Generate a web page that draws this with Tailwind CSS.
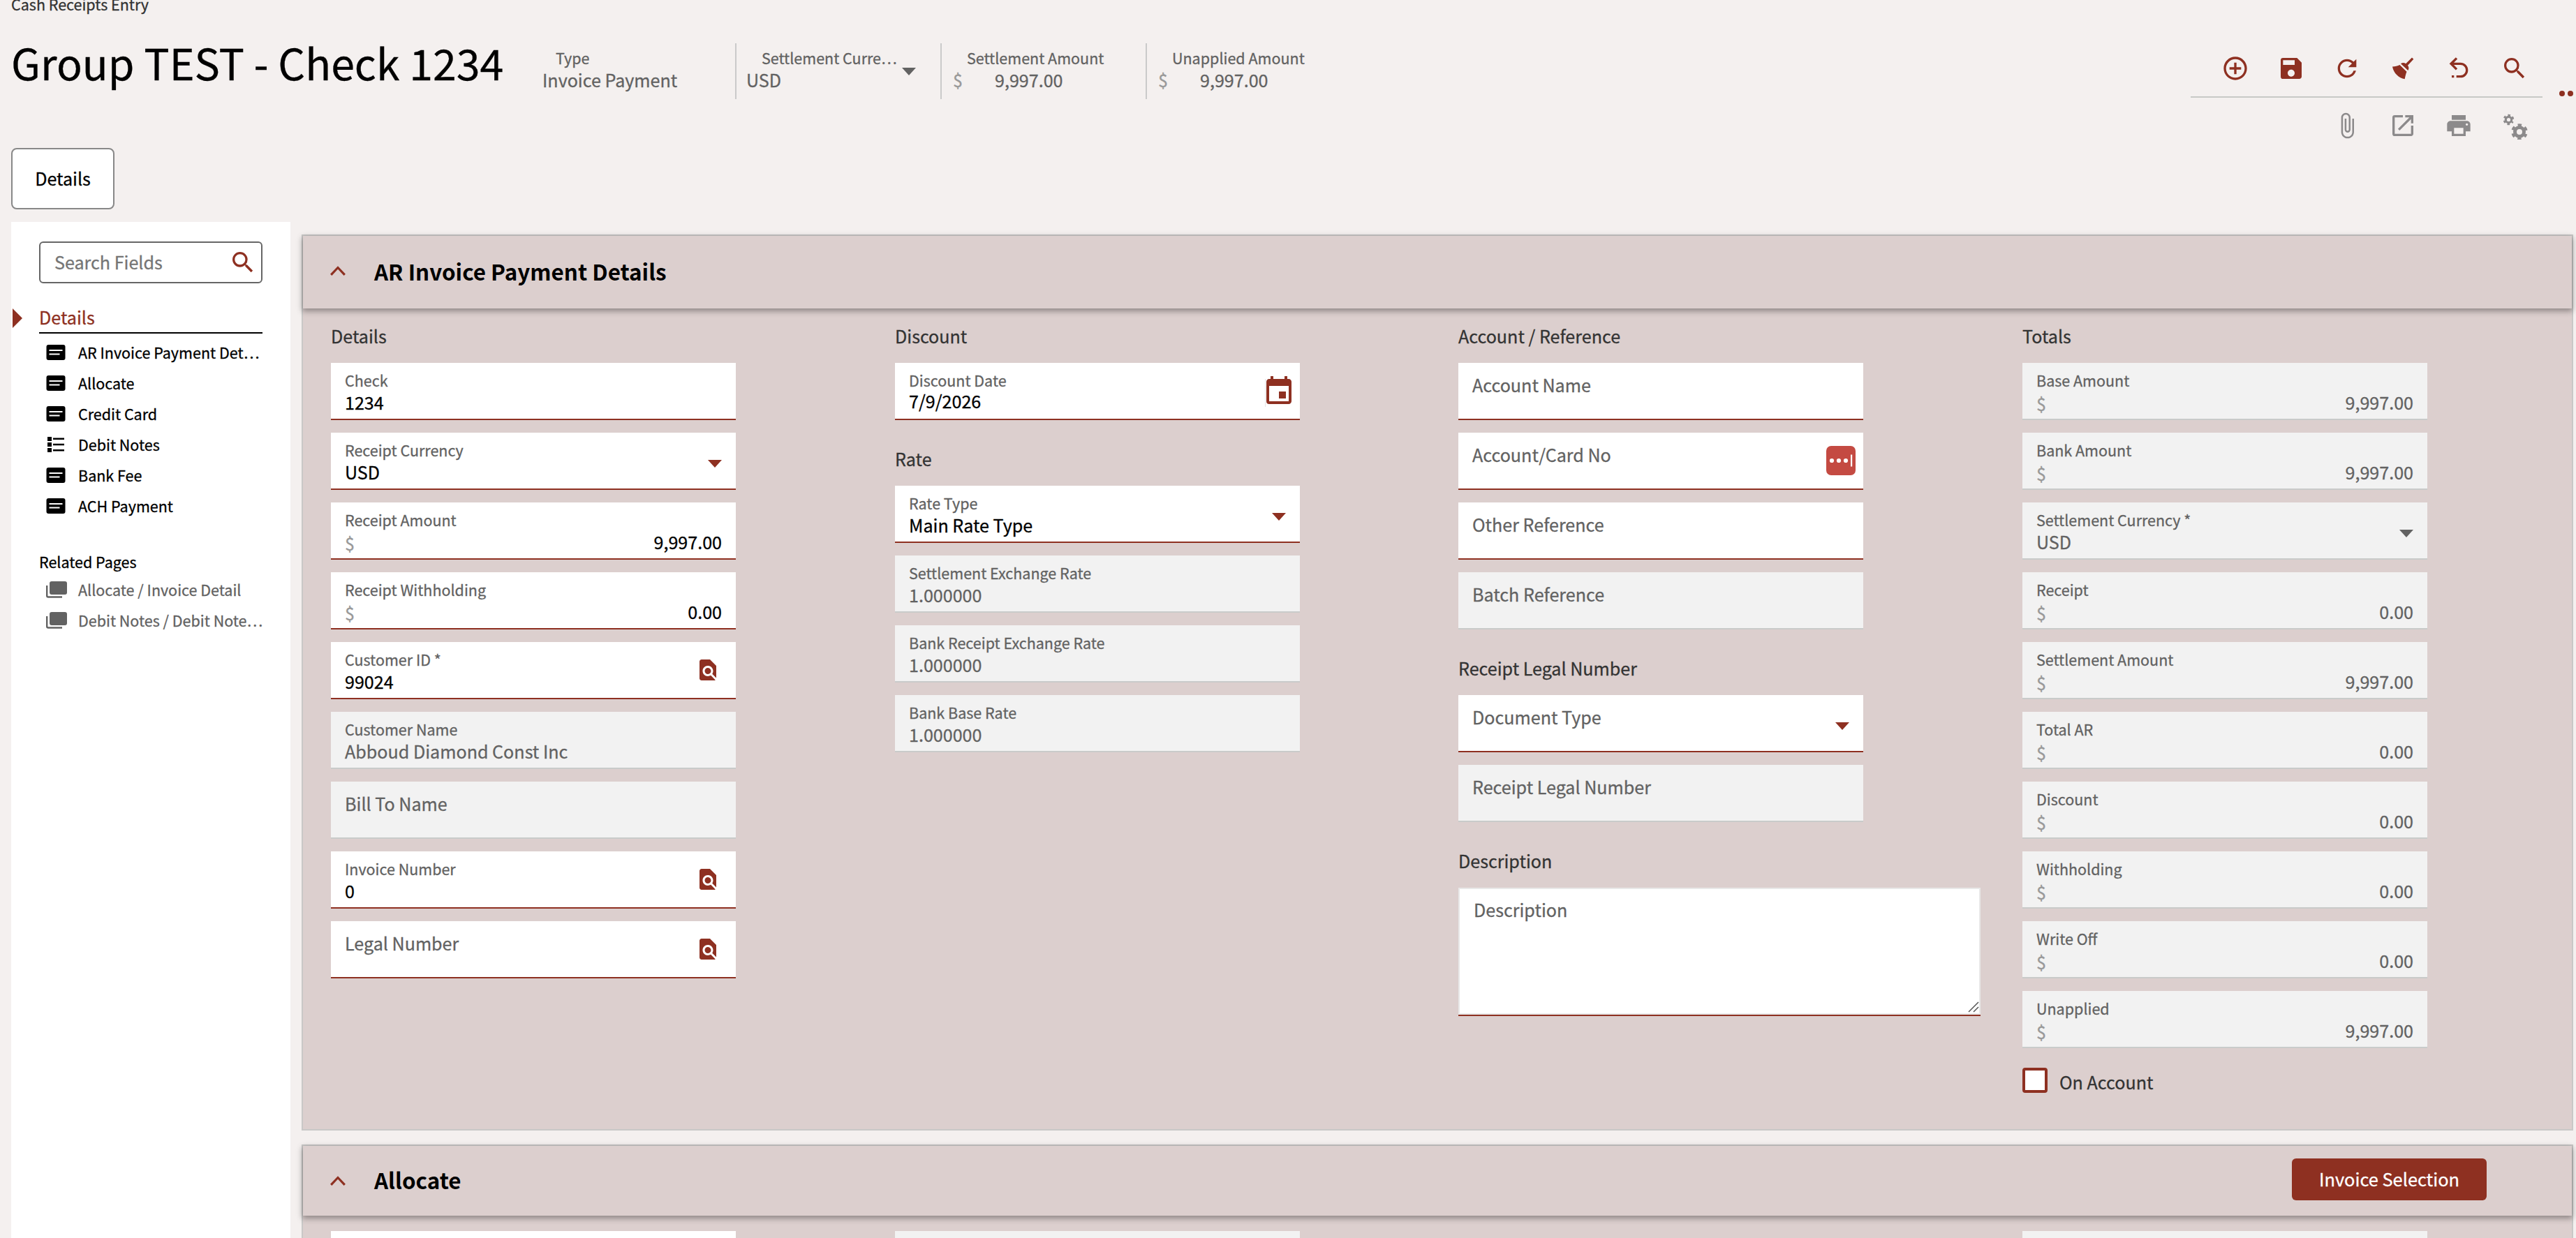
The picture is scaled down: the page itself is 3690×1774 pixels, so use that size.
<!DOCTYPE html>
<html lang="en">
  <head>
    <meta charset="UTF-8" />
    <meta name="viewport" content="width=device-width, initial-scale=1.0" />
    <title>Cash Receipts Entry</title>
    <script src="https://cdn.jsdelivr.net/npm/@tailwindcss/browser@4"></script>
  </head>
  <body
    class="h-screen overflow-hidden bg-[#f4f0ef] text-black text-[25.1px] leading-8 whitespace-nowrap [-webkit-text-stroke:0.3px] font-['Noto_Sans_CJK_SC','Noto_Sans',sans-serif]"
  >
    <div class="flex flex-col h-screen overflow-hidden">
      <!-- Header -->
      <header class="flex justify-between h-[212px] shrink-0 pl-4">
        <div>
          <div class="h-5 flex items-end text-[21.5px] leading-7 text-[#333]">
            <span>Cash Receipts Entry</span>
          </div>
          <div class="flex">
            <h1 class="w-[761px] mt-[29px] text-[60.9px] leading-[80px]">
              Group TEST - Check 1234
            </h1>
            <div class="flex mt-[42px] h-20 text-[#626262]">
              <div class="w-[276px] pt-[7px]">
                <div class="pl-[19px] text-[21.5px] leading-7">Type</div>
                <div class="mt-px">Invoice Payment</div>
              </div>
              <div class="w-[294px] flex border-l-2 border-[#cacaca] pt-[7px] pl-[14px]">
                <div class="w-[223px]">
                  <div class="pl-[22px] text-[21.5px] leading-7">
                    Settlement Curre…
                  </div>
                  <div class="mt-px">USD</div>
                </div>
                <svg class="w-5 h-[11px] mt-7" viewBox="0 0 20 11" fill="#626262"><path d="M0 0h20L10 11z" /></svg>
              </div>
              <div class="w-[294px] border-l-2 border-[#cacaca] pt-[7px] pl-4">
                <div class="pl-5 text-[21.5px] leading-7">
                  Settlement Amount
                </div>
                <div class="flex mt-px">
                  <span class="w-[60px] text-[#999]">$</span>
                  <span>9,997.00</span>
                </div>
              </div>
              <div class="w-[294px] border-l-2 border-[#cacaca] pt-[7px] pl-4">
                <div class="pl-5 text-[21.5px] leading-7">
                  Unapplied Amount
                </div>
                <div class="flex mt-px">
                  <span class="w-[60px] text-[#999]">$</span>
                  <span>9,997.00</span>
                </div>
              </div>
            </div>
          </div>
        </div>

        <!-- Toolbar -->
        <div class="flex">
          <div class="w-[504px] pt-[78px]">
            <div class="flex justify-end gap-10 pr-5 pb-5 border-b-2 border-[#c8c9c6] text-[#8e3021]">
              <svg class="w-10 h-10" viewBox="0 0 24 24" fill="currentColor"><path d="M13 7h-2v4H7v2h4v4h2v-4h4v-2h-4V7zm-1-5C6.480 2 2 6.480 2 12s4.480 10 10 10 10-4.480 10-10S17.520 2 12 2zm0 18c-4.410 0-8-3.590-8-8s3.590-8 8-8 8 3.590 8 8-3.590 8-8 8z" /></svg>
              <svg class="w-10 h-10" viewBox="0 0 24 24" fill="currentColor"><path d="M17 3H5a2 2 0 0 0-2 2v14a2 2 0 0 0 2 2h14c1.100 0 2-.900 2-2V7l-4-4zm-5 16c-1.660 0-3-1.340-3-3s1.340-3 3-3 3 1.340 3 3-1.340 3-3 3zm3-10H5V5h10v4z" /></svg>
              <svg class="w-10 h-10" viewBox="0 0 24 24" fill="currentColor"><path d="M17.650 6.350A7.958 7.958 0 0 0 12 4c-4.420 0-7.990 3.580-7.990 8s3.570 8 7.990 8c3.730 0 6.840-2.550 7.730-6h-2.080A5.990 5.990 0 0 1 12 18c-3.310 0-6-2.690-6-6s2.690-6 6-6c1.660 0 3.140.690 4.220 1.780L13 11h7V4l-2.350 2.350z" /></svg>
              <svg class="w-10 h-10" viewBox="0 0 24 24" fill="currentColor"><path d="M19.800 2.700l1.400 1.400-5 5.400c1 1.200 1.200 2.900.200 4.300L10.200 7.900c1.400-1 3.100-.900 4.300.100zM9.300 9l6 5.900c-.7 1.700-1.300 4-1.700 6.300-5.200-1-9.500-5-10.600-10.700C5.300 10.500 7.600 9.800 9.300 9z" /></svg>
              <svg class="w-10 h-10" viewBox="0 0 24 24" fill="currentColor"><path d="M13.500 7A6.500 6.500 0 0 1 20 13.500 6.500 6.500 0 0 1 13.500 20H10v-2h3.500c2.500 0 4.500-2 4.500-4.500S16 9 13.500 9H7.830l3.080 3.090L9.500 13.500 4 8l5.500-5.500 1.420 1.410L7.830 7h5.670M6 18h2v2H6v-2z" /></svg>
              <svg class="w-10 h-10" viewBox="0 0 24 24" fill="currentColor"><path d="M15.500 14h-.790l-.280-.270A6.471 6.471 0 0 0 16 9.500 6.500 6.500 0 1 0 9.500 16c1.610 0 3.090-.590 4.230-1.570l.270.280v.790l5 4.990L20.490 19l-4.990-5zm-6 0C7.010 14 5 11.990 5 9.500S7.010 5 9.500 5 14 7.010 14 9.500 11.990 14 9.500 14z" /></svg>
            </div>
            <div class="flex justify-end gap-10 pr-5 pt-5 text-[#8c8a8b]">
              <svg class="w-10 h-10" viewBox="0 0 24 24" fill="currentColor"><path d="M16.500 6v11.500c0 2.210-1.790 4-4 4s-4-1.790-4-4V5a2.500 2.500 0 0 1 5 0v10.500c0 .550-.450 1-1 1s-1-.450-1-1V6H10v9.500a2.500 2.500 0 0 0 5 0V5c0-2.210-1.790-4-4-4S7 2.790 7 5v12.500c0 3.040 2.460 5.500 5.500 5.500s5.500-2.460 5.500-5.500V6h-1.500z" /></svg>
              <svg class="w-10 h-10" viewBox="0 0 24 24" fill="currentColor"><path d="M19 19H5V5h7V3H5a2 2 0 0 0-2 2v14a2 2 0 0 0 2 2h14c1.100 0 2-.900 2-2v-7h-2v7zM14 3v2h3.590l-9.830 9.830 1.410 1.410L19 6.410V10h2V3h-7z" /></svg>
              <svg class="w-10 h-10" viewBox="0 0 24 24" fill="currentColor"><path d="M19 8H5c-1.660 0-3 1.340-3 3v6h4v4h12v-4h4v-6c0-1.660-1.340-3-3-3zm-3 11H8v-5h8v5zm3-7c-.550 0-1-.450-1-1s.450-1 1-1 1 .450 1 1-.450 1-1 1zm-1-9H6v4h12V3z" /></svg>
              <svg class="w-10 h-10" viewBox="0 0 40 40">
                <g fill="none" stroke="currentColor">
                  <circle cx="11.500" cy="11.500" r="4.200" stroke-width="3.200" />
                  <circle cx="11.500" cy="11.500" r="6.400" stroke-width="2.800" stroke-dasharray="3.350 3.350" stroke-dashoffset="1.700" transform="rotate(30 11.500 11.500)" />
                  <circle cx="27" cy="29" r="6.500" stroke-width="5" />
                  <circle cx="27" cy="29" r="10" stroke-width="3.600" stroke-dasharray="5.240 5.240" stroke-dashoffset="2.620" transform="rotate(30 27 29)" />
                </g>
              </svg>
            </div>
          </div>
          <div class="flex gap-1 w-12 pl-6 pt-[130px] overflow-hidden">
            <span class="w-2 h-2 shrink-0 rounded-full bg-[#8e3021]"></span>
            <span class="w-2 h-2 shrink-0 rounded-full bg-[#8e3021]"></span>
          </div>
        </div>
      </header>

      <!-- Tabs -->
      <nav class="h-[106px] shrink-0 pl-4">
        <div class="w-[148px] h-[88px] flex items-center justify-center pb-0.5 rounded-lg border-2 border-[#888] bg-white">
          Details
        </div>
      </nav>

      <div class="flex flex-1 min-h-0 pl-4">
        <!-- Sidebar -->
        <aside class="w-[400px] shrink-0 bg-white pt-7">
          <div class="flex items-center justify-between ml-10 w-80 h-[60px] border-2 border-[#666] rounded-md pl-5 pr-1.5 text-[#757575]">
            <span class="pb-0.5">Search Fields</span>
            <svg class="w-10 h-10" viewBox="0 0 24 24" fill="#8e3021"><path d="M15.500 14h-.790l-.280-.270A6.471 6.471 0 0 0 16 9.500 6.500 6.500 0 1 0 9.500 16c1.610 0 3.090-.590 4.230-1.570l.270.280v.790l5 4.990L20.490 19l-4.990-5zm-6 0C7.010 14 5 11.990 5 9.500S7.010 5 9.500 5 14 7.010 14 9.500 11.990 14 9.500 14z" /></svg>
          </div>
          <div class="flex pl-0.5 mt-8 text-[#8e3021]">
            <svg class="w-3.5 h-7 mt-1 mr-6" viewBox="0 0 14 28" fill="currentColor"><path d="M0 0l14 14L0 28z" /></svg>
            <div class="w-80 h-10 border-b-2 border-black">Details</div>
          </div>
          <ul id="sections" class="pl-[50px] pt-[5px] text-[21.5px]"></ul>
          <div class="pl-10 mt-8 pt-2.5 h-[50px] text-[21.5px]">Related Pages</div>
          <ul id="related" class="pl-[50px] -mt-1.5 text-[21.5px] text-[#626262]"></ul>
        </aside>

        <!-- Cards -->
        <main class="flex flex-col gap-5 pl-4 pt-[18px] w-[3270px] shrink-0">
          <section class="h-[1284px] shrink-0 border-2 border-[#c9c8c7] bg-[#dccfce]">
            <div class="h-[104px] flex items-center pl-[39px] shadow-[0_3px_8px_1px_rgba(0,0,0,0.35)]">
              <svg class="w-[22px] h-[14px] -mt-1" viewBox="0 0 22 14" fill="none" stroke="#8e3021" stroke-width="3.200"><path d="M1.200 12.800L11 2.500l9.800 10.300" /></svg>
              <h2 class="ml-[41px] pb-[3px] text-[31.4px] leading-10 font-bold [-webkit-text-stroke:0px]">
                AR Invoice Payment Details
              </h2>
            </div>
            <div class="grid grid-cols-[808px_807px_808px_580px] pl-10 pt-[22px]">
              <div id="details"></div>
              <div id="discount"></div>
              <div id="account"></div>
              <div id="totals"></div>
            </div>
          </section>

          <section class="h-[600px] shrink-0 border-2 border-[#c9c8c7] bg-[#dccfce]">
            <div class="h-[100px] flex items-center pl-[39px] pr-[122px] shadow-[0_3px_8px_1px_rgba(0,0,0,0.35)]">
              <svg class="w-[22px] h-[14px]" viewBox="0 0 22 14" fill="none" stroke="#8e3021" stroke-width="3.200"><path d="M1.200 12.800L11 2.500l9.800 10.300" /></svg>
              <h2 class="ml-[41px] pb-[3px] text-[31.4px] leading-10 font-bold [-webkit-text-stroke:0px]">
                Allocate
              </h2>
              <button class="ml-auto mb-1 pb-0.5 w-[279px] h-[60px] rounded-md bg-[#8e3021] text-[25.4px] text-white">
                Invoice Selection
              </button>
            </div>
            <div class="grid grid-cols-[808px_807px_808px_580px] pl-10 pt-[22px]">
              <div class="w-[580px] h-20 bg-white"></div>
              <div class="w-[580px] h-20 bg-[#f2f2f2]"></div>
              <div></div>
              <div class="w-[580px] h-20 bg-[#f2f2f2]"></div>
            </div>
          </section>
        </main>
      </div>
    </div>

    <script>
      const icons = {
        form: '<svg class="w-7 h-6" viewBox="0 0 28 24"><rect x="0.500" y="1" width="27" height="22" rx="3" fill="#000" /><path d="M4.500 9h19M4.500 14.500h15" stroke="#fff" stroke-width="2" /></svg>',
        list: '<svg class="w-7 h-6" viewBox="0 0 28 24"><path d="M2 1h6v6H2zM2 9h6v6H2zM2 17h6v6H2zM10 2.600h16v2.400H10zM10 10.800h16v2.400H10zM10 19h16v2.400H10z" /></svg>',
        page: '<svg class="w-[30px] h-6" viewBox="0 0 30 24"><rect x="5" y="0" width="25" height="19" rx="3" fill="#626262" /><path d="M1.200 6v14.500a2 2 0 0 0 2 2H23" fill="none" stroke="#626262" stroke-width="2.400" /></svg>',
        caret: '<svg class="w-5 h-[11px] mt-[39px] mr-5" viewBox="0 0 20 11" fill="#8e3021"><path d="M0 0h20L10 11z" /></svg>',
        caretGrey: '<svg class="w-5 h-[11px] mt-[39px] mr-5" viewBox="0 0 20 11" fill="#626262"><path d="M0 0h20L10 11z" /></svg>',
        lookup: '<svg class="w-9 h-9 mt-[22px] mr-[22px]" viewBox="0 0 24 24" fill="#8e3021"><path d="M20 19.590V8l-6-6H6c-1.100 0-1.990.900-1.990 2L4 20c0 1.100.890 2 1.990 2H18c.450 0 .850-.150 1.190-.400l-4.430-4.430c-.800.520-1.740.830-2.760.830-2.760 0-5-2.240-5-5s2.240-5 5-5 5 2.240 5 5c0 1.020-.310 1.960-.830 2.750L20 19.590zM9 13c0 1.660 1.340 3 3 3s3-1.340 3-3-1.340-3-3-3-3 1.340-3 3z" /></svg>',
        date: '<svg class="w-12 h-12 mt-[17px] mr-1.5" viewBox="0 0 24 24" fill="#8e3021"><path d="M2 3h.500v20H2z" fill="#e4e4e4" /><path d="M17 12h-5v5h5v-5zM16 1v2H8V1H6v2H5c-1.110 0-1.990.900-1.990 2L3 19a2 2 0 0 0 2 2h14c1.100 0 2-.900 2-2V5c0-1.100-.900-2-2-2h-1V1h-2zm3 18H5V8h14v11z" /></svg>',
        card: '<svg class="w-[42px] h-[42px] mt-[19px] mr-[11px]" viewBox="0 0 42 42"><rect width="42" height="42" rx="7" fill="#c44a42" /><g fill="#fff"><circle cx="8" cy="21" r="3.100" /><circle cx="18" cy="21" r="3.100" /><circle cx="28" cy="21" r="3.100" /><rect x="35" y="12.500" width="2.200" height="17" /></g></svg>',
      };

      function navItem([icon, text]) {
        return `<li class="h-11 flex items-center"><span class="w-[46px] flex">${icons[icon]}</span>${text}</li>`;
      }

      // f: label, value, money (shows the $ sign), off (read only), icon
      function field(f) {
        const box = f.off
          ? "bg-[#f2f2f2] border-[#c9cbca] text-[#626262]"
          : "bg-white border-[#8e3021]";
        let body = `<div class="pt-[15px] text-[#626262]">${f.label}</div>`;
        if (f.value) {
          const value = f.money
            ? `<div class="flex justify-between mt-px pr-5"><span class="pt-0.5 text-[#999]">$</span><span>${f.value}</span></div>`
            : `<div class="${f.icon === "date" ? "-mt-px" : "mt-px"}">${f.value}</div>`;
          body = `<div class="pt-[11px] text-[21.5px] leading-7 text-[#626262]">${f.label}</div>${value}`;
        }
        return `<div class="flex items-start w-[580px] h-[82px] mb-[18px] pl-5 border-b-2 ${box}"><div class="flex-1">${body}</div>${f.icon ? icons[f.icon] : ""}</div>`;
      }

      function heading(text, next) {
        return `<div class="h-14 pt-px text-[#333] ${next ? "mt-[38px]" : ""}">${text}</div>`;
      }

      const money = (label, value) => ({ label, value, money: true, off: true });

      document.getElementById("sections").innerHTML = [
        ["form", "AR Invoice Payment Det…"],
        ["form", "Allocate"],
        ["form", "Credit Card"],
        ["list", "Debit Notes"],
        ["form", "Bank Fee"],
        ["form", "ACH Payment"],
      ].map(navItem).join("");

      document.getElementById("related").innerHTML = [
        ["page", "Allocate / Invoice Detail"],
        ["page", "Debit Notes / Debit Note…"],
      ].map(navItem).join("");

      document.getElementById("details").innerHTML =
        heading("Details") +
        [
          { label: "Check", value: "1234" },
          { label: "Receipt Currency", value: "USD", icon: "caret" },
          { label: "Receipt Amount", value: "9,997.00", money: true },
          { label: "Receipt Withholding", value: "0.00", money: true },
          { label: "Customer ID *", value: "99024", icon: "lookup" },
          { label: "Customer Name", value: "Abboud Diamond Const Inc", off: true },
          { label: "Bill To Name", off: true },
          { label: "Invoice Number", value: "0", icon: "lookup" },
          { label: "Legal Number", icon: "lookup" },
        ].map(field).join("");

      document.getElementById("discount").innerHTML =
        heading("Discount") +
        field({ label: "Discount Date", value: "7/9/2026", icon: "date" }) +
        heading("Rate", true) +
        [
          { label: "Rate Type", value: "Main Rate Type", icon: "caret" },
          { label: "Settlement Exchange Rate", value: "1.000000", off: true },
          { label: "Bank Receipt Exchange Rate", value: "1.000000", off: true },
          { label: "Bank Base Rate", value: "1.000000", off: true },
        ].map(field).join("");

      document.getElementById("account").innerHTML =
        heading("Account / Reference") +
        [
          { label: "Account Name" },
          { label: "Account/Card No", icon: "card" },
          { label: "Other Reference" },
          { label: "Batch Reference", off: true },
        ].map(field).join("") +
        heading("Receipt Legal Number", true) +
        field({ label: "Document Type", icon: "caret" }) +
        field({ label: "Receipt Legal Number", off: true }) +
        heading("Description", true) +
        `<div class="w-[748px] h-[184px] border-b-2 border-[#8e3021]">
          <div class="flex justify-between h-[182px] border-2 border-[#e8e8e8] bg-white pl-5 pt-[13px] text-[#626262]">
            Description
            <svg class="w-4 h-4 self-end mb-px" viewBox="0 0 16 16" stroke="#555" stroke-width="1.500"><path d="M1 15L15 1M8 15l7-7" /></svg>
          </div>
        </div>`;

      document.getElementById("totals").innerHTML =
        heading("Totals") +
        [
          money("Base Amount", "9,997.00"),
          money("Bank Amount", "9,997.00"),
          { label: "Settlement Currency *", value: "USD", off: true, icon: "caretGrey" },
          money("Receipt", "0.00"),
          money("Settlement Amount", "9,997.00"),
          money("Total AR", "0.00"),
          money("Discount", "0.00"),
          money("Withholding", "0.00"),
          money("Write Off", "0.00"),
          money("Unapplied", "9,997.00"),
        ].map(field).join("") +
        `<label class="flex items-center mt-7 text-[#333]">
          <span class="w-9 h-9 mr-[17px] rounded border-4 border-[#8e3021] bg-white"></span>
          <span class="pt-1">On Account</span>
        </label>`;
    </script>
  </body>
</html>
